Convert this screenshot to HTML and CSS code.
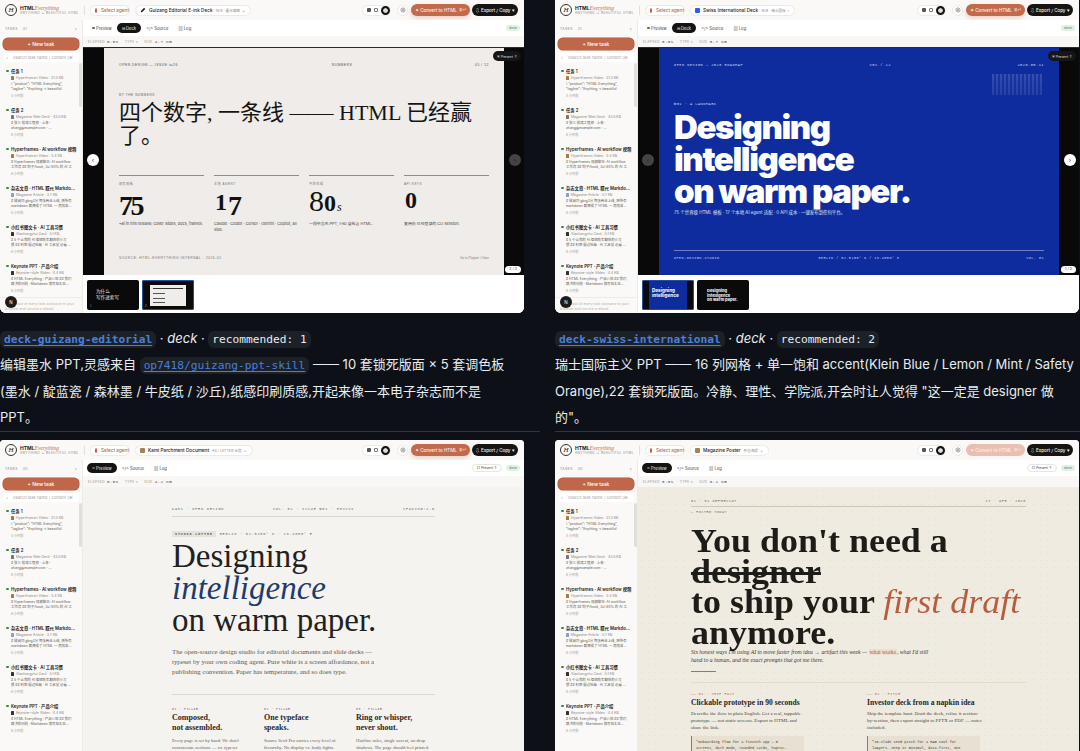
FILE: index.html
```html
<!DOCTYPE html>
<html lang="zh-CN">
<head>
    <meta charset="UTF-8">
    <meta name="viewport" content="width=device-width, initial-scale=1.0">
    <title>HTML Everything templates</title>
    <link rel="stylesheet" href="styles.css">
</head>
<body>
<div class="gallery">

    <!-- deck-guizang-editorial -->
    <div class="cell">
        <div class="window win-top">
            <div class="topbar">
                <div class="logo"><span class="logo-mark">H</span><div><div class="logo-name">HTML<em>Everything</em></div><div class="logo-tag">ANYTHING → BEAUTIFUL HTML</div></div></div>
                <span class="bar-sep"></span>
                <div class="pill agent"><i class="agent-dot"></i>Select agent</div>
                <div class="pill doc"><svg class="pen" viewBox="0 0 8 8"><path d="M1 7 L1.5 5 L5.5 1 L7 2.5 L3 6.5 Z"/></svg>Guizang Editorial E-ink Deck <small>16:9 · 墨水编辑</small> <b>⌄</b></div>
                <div class="bar-right">
                    <div class="views"><i class="v v1"></i><i class="v v2"></i><i class="v v3"></i></div>
                    <div class="gear"><svg viewBox="0 0 8 8"><circle cx="4" cy="4" r="2.8"/><circle cx="4" cy="4" r="1"/></svg></div>
                    <div class="btn-convert">✦ Convert to HTML <small>⌘↵</small></div>
                    <div class="btn-export">⇩ Export / Copy ▾</div>
                </div>
            </div>
            <div class="body">
                <aside class="sidebar">
                    <div class="side-head"><span>TASKS</span><span>31</span><b>‹</b></div>
                    <div class="new-task">+ New task</div>
                    <div class="search"><span>⌕</span>Search task name / content (⌘</div>
                    <div class="tasks">
                        <div class="task"><div class="t-title">任务 1</div><div class="t-meta"><i class="ic ic-a"></i>Hyperframes Video · 31.3 KB</div><div class="t-desc">{ "product": "HTML Everything",<br>"tagline": "Anything → beautiful</div><div class="t-time">5 小时前</div></div>
                        <div class="task"><div class="t-title">任务 2</div><div class="t-meta"><i class="ic ic-b"></i>Magazine Web Deck · 43.0 KB</div><div class="t-desc"># 张三 前端工程师 · 上海 ·<br>zhang@example.com · ...</div><div class="t-time">6 小时前</div></div>
                        <div class="task"><div class="t-title">Hyperframes · AI workflow 视频</div><div class="t-meta"><i class="ic ic-a"></i>Hyperframes Video · 3.4 KB</div><div class="t-desc"># Hyperframes 视频脚本: AI workflow<br>工作流 ## 钩子(hook, 3s) 80% 的 AI 工</div><div class="t-time">6 小时前</div></div>
                        <div class="task"><div class="t-title">杂志文章 · HTML 取代 Markdo...</div><div class="t-meta"><i class="ic ic-c"></i>Magazine Article · 3.7 KB</div><div class="t-desc"># 微调剂 gbrg2分 期多商业上线, 把所有<br>markdown 都换成了 HTML — 而效果...</div><div class="t-time">6 小时前</div></div>
                        <div class="task"><div class="t-title">小红书图文卡 · AI 工具习惯</div><div class="t-meta"><i class="ic ic-d"></i>Xiaohongshu Card · 5.1 KB</div><div class="t-desc"># 5 个让我的 AI 编辑效率翻倍的小习<br>惯 ## 封面 据过低碳 · AI 工具党 必看 ...</div><div class="t-time">6 小时前</div></div>
                        <div class="task"><div class="t-title">Keynote PPT · 产品介绍</div><div class="t-meta"><i class="ic ic-d"></i>Keynote-style Slides · 4.4 KB</div><div class="t-desc"># HTML Everything · 产品介绍 ## 我们<br>解决的问题 · Markdown 够写但太丑...</div><div class="t-time">6 小时前</div></div>
                    </div>
                    <div class="scroll-thumb"></div>
                    <div class="side-foot">The output of every task autosave to your browser and survive a reload</div>
                    <div class="avatar">N</div>
                </aside>
                <main class="main">
                    <div class="tabs">
                        <span class="tab"><i class="tab-dot"></i>Preview</span>
                        <span class="tab active">⊟ Deck</span>
                        <span class="tab">&lt;/&gt; Source</span>
                        <span class="tab">▤ Log</span>
                        <span class="done">done</span>
                    </div>
                    <div class="meta"><span>ELAPSED</span><b>0.0s</b><span>TYPE ▾</span><span>SIZE</span><b>4.7 KB</b></div>
                    <div class="stage">
                        <div class="slide slide-ink">
                            <div class="ink-head"><span>OPEN DESIGN — ISSUE №26</span><span>NUMBERS</span><span>05 / 12</span></div>
                            <div class="ink-kicker">BY THE NUMBERS</div>
                            <h1 class="ink-title">四个数字, 一条线 —— HTML 已经赢了。</h1>
                            <div class="ink-stats">
                                <div class="stat"><div class="s-label">现有模板</div><div class="s-num"><span class="big drop">7</span><span class="big drop">5</span></div><p>~ai in this release; cover slides, docs, frames.</p></div>
                                <div class="stat"><div class="s-label">本地 AGENT</div><div class="s-num"><span class="low">1</span><span class="big drop">7</span></div><p>Claude · Codex · Cursor · Gemini · Copilot, all side.</p></div>
                                <div class="stat"><div class="s-label">平均生成</div><div class="s-num"><span class="big">8</span><span class="low">0</span><em>s</em></div><p>一段杂志风 PPT, ≥60 自包含 HTML.</p></div>
                                <div class="stat"><div class="s-label">API KEYS</div><div class="s-num"><span class="low">0</span></div><p>复用你 已经登录的 CLI session.</p></div>
                            </div>
                            <div class="ink-foot"><span>SOURCE: HTML-EVERYTHING INTERNAL · 2026-05</span><em>Set in Playfair // Inter</em></div>
                        </div>
                        <div class="present">▣ Present ↑</div>
                        <div class="arrow prev on">‹</div>
                        <div class="arrow next">›</div>
                        <div class="counter">2 / 2</div>
                    </div>
                    <div class="thumbs">
                        <div class="thumb t-dark"><span>为什么<br>写作进索写</span><u>1</u></div>
                        <div class="thumb selected t-black"><div class="mini-ink"><i></i><i></i><i></i><i></i></div><u>2</u></div>
                    </div>
                </main>
            </div>
        </div>
        <div class="caption">
            <a class="chip chip-link">deck-guizang-editorial</a> · <em>deck</em> · <code class="chip">recommended: 1</code><br>
            编辑墨水 PPT,灵感来自 <a class="chip chip-link thin">op7418/guizang-ppt-skill</a> —— 10 套锁死版面 × 5 套调色板<br>
            (墨水 / 靛蓝瓷 / 森林墨 / 牛皮纸 / 沙丘),纸感印刷质感,开起来像一本电子杂志而不是<br>
            PPT。
        </div>
    </div>

    <!-- deck-swiss-international -->
    <div class="cell">
        <div class="window win-top">
            <div class="topbar">
                <div class="logo"><span class="logo-mark">H</span><div><div class="logo-name">HTML<em>Everything</em></div><div class="logo-tag">ANYTHING → BEAUTIFUL HTML</div></div></div>
                <span class="bar-sep"></span>
                <div class="pill agent"><i class="agent-dot"></i>Select agent</div>
                <div class="pill doc"><i class="doc-sq blue"></i>Swiss International Deck <small>16:9 · 瑞士国际</small> <b>›</b></div>
                <div class="bar-right">
                    <div class="views"><i class="v v1"></i><i class="v v2"></i><i class="v v3"></i></div>
                    <div class="gear"><svg viewBox="0 0 8 8"><circle cx="4" cy="4" r="2.8"/><circle cx="4" cy="4" r="1"/></svg></div>
                    <div class="btn-convert">✦ Convert to HTML <small>⌘↵</small></div>
                    <div class="btn-export">⇩ Export / Copy ▾</div>
                </div>
            </div>
            <div class="body">
                <aside class="sidebar">
                    <div class="side-head"><span>TASKS</span><span>31</span><b>‹</b></div>
                    <div class="new-task">+ New task</div>
                    <div class="search"><span>⌕</span>Search task name / content (⌘</div>
                    <div class="tasks">
                        <div class="task"><div class="t-title">任务 1</div><div class="t-meta"><i class="ic ic-a"></i>Hyperframes Video · 31.3 KB</div><div class="t-desc">{ "product": "HTML Everything",<br>"tagline": "Anything → beautiful</div><div class="t-time">5 小时前</div></div>
                        <div class="task"><div class="t-title">任务 2</div><div class="t-meta"><i class="ic ic-b"></i>Magazine Web Deck · 43.0 KB</div><div class="t-desc"># 张三 前端工程师 · 上海 ·<br>zhang@example.com · ...</div><div class="t-time">6 小时前</div></div>
                        <div class="task"><div class="t-title">Hyperframes · AI workflow 视频</div><div class="t-meta"><i class="ic ic-a"></i>Hyperframes Video · 3.4 KB</div><div class="t-desc"># Hyperframes 视频脚本: AI workflow<br>工作流 ## 钩子(hook, 3s) 80% 的 AI 工</div><div class="t-time">6 小时前</div></div>
                        <div class="task"><div class="t-title">杂志文章 · HTML 取代 Markdo...</div><div class="t-meta"><i class="ic ic-c"></i>Magazine Article · 3.7 KB</div><div class="t-desc"># 微调剂 gbrg2分 期多商业上线, 把所有<br>markdown 都换成了 HTML — 而效果...</div><div class="t-time">6 小时前</div></div>
                        <div class="task"><div class="t-title">小红书图文卡 · AI 工具习惯</div><div class="t-meta"><i class="ic ic-d"></i>Xiaohongshu Card · 5.1 KB</div><div class="t-desc"># 5 个让我的 AI 编辑效率翻倍的小习<br>惯 ## 封面 据过低碳 · AI 工具党 必看 ...</div><div class="t-time">6 小时前</div></div>
                        <div class="task"><div class="t-title">Keynote PPT · 产品介绍</div><div class="t-meta"><i class="ic ic-d"></i>Keynote-style Slides · 4.4 KB</div><div class="t-desc"># HTML Everything · 产品介绍 ## 我们<br>解决的问题 · Markdown 够写但太丑...</div><div class="t-time">6 小时前</div></div>
                    </div>
                    <div class="scroll-thumb"></div>
                    <div class="side-foot">The output of every task autosave to your browser and survive a reload</div>
                    <div class="avatar">N</div>
                </aside>
                <main class="main">
                    <div class="tabs">
                        <span class="tab"><i class="tab-dot"></i>Preview</span>
                        <span class="tab active">⊟ Deck</span>
                        <span class="tab">&lt;/&gt; Source</span>
                        <span class="tab">▤ Log</span>
                        <span class="done">done</span>
                    </div>
                    <div class="meta"><span>ELAPSED</span><b>0.0s</b><span>TYPE ▾</span><span>SIZE</span><b>5.7 KB</b></div>
                    <div class="stage">
                        <div class="slide slide-swiss">
                            <div class="swiss-head"><span>OPEN DESIGN — 2026 ROADMAP</span><span>S01 / 22</span><span>2026.05.11</span></div>
                            <div class="swiss-bars"></div>
                            <div class="swiss-kicker">№01 · A LANDMARK</div>
                            <h1 class="swiss-title">Designing<br>intelligence<br>on warm paper.</h1>
                            <p class="swiss-sub">75 个世界级 HTML 模板 · 17 个本地 AI agent 适配 · 0 API 成本 · 一键发布到任何平台。</p>
                            <div class="swiss-foot"><span>OPEN-DESIGN.STUDIO</span><span>BERLIN / 52.5200° N / 13.4050° E</span><span>VOL. 01</span></div>
                        </div>
                        <div class="present">▣ Present ↑</div>
                        <div class="arrow prev">‹</div>
                        <div class="arrow next on">›</div>
                        <div class="counter">1 / 2</div>
                    </div>
                    <div class="thumbs">
                        <div class="thumb selected t-blue"><span>Designing<br>intelligence</span></div>
                        <div class="thumb t-black t-second"><span>Designing<br>intelligence<br>on warm paper.</span></div>
                    </div>
                </main>
            </div>
        </div>
        <div class="caption">
            <a class="chip chip-link">deck-swiss-international</a> · <em>deck</em> · <code class="chip">recommended: 2</code><br>
            瑞士国际主义 PPT —— 16 列网格 + 单一饱和 accent(Klein Blue / Lemon / Mint / Safety<br>
            Orange),22 套锁死版面。冷静、理性、学院派,开会时让人觉得 "这一定是 designer 做<br>
            的"。
        </div>
    </div>

    <!-- kami -->
    <div class="cell">
        <div class="window">
            <div class="topbar">
                <div class="logo"><span class="logo-mark">H</span><div><div class="logo-name">HTML<em>Everything</em></div><div class="logo-tag">ANYTHING → BEAUTIFUL HTML</div></div></div>
                <span class="bar-sep"></span>
                <div class="pill agent"><i class="agent-dot"></i>Select agent</div>
                <div class="pill doc"><i class="doc-sq tan"></i>Kami Parchment Document <small>A4 / LETTER 长信</small> <b>⌄</b></div>
                <div class="bar-right">
                    <div class="views"><i class="v v1"></i><i class="v v2"></i><i class="v v3"></i></div>
                    <div class="gear"><svg viewBox="0 0 8 8"><circle cx="4" cy="4" r="2.8"/><circle cx="4" cy="4" r="1"/></svg></div>
                    <div class="btn-convert">✦ Convert to HTML <small>⌘↵</small></div>
                    <div class="btn-export">⇩ Export / Copy ▾</div>
                </div>
            </div>
            <div class="body">
                <aside class="sidebar">
                    <div class="side-head"><span>TASKS</span><span>30</span><b>‹</b></div>
                    <div class="new-task">+ New task</div>
                    <div class="search"><span>⌕</span>Search task name / content (⌘</div>
                    <div class="tasks">
                        <div class="task"><div class="t-title">任务 1</div><div class="t-meta"><i class="ic ic-a"></i>Hyperframes Video · 31.3 KB</div><div class="t-desc">{ "product": "HTML Everything",<br>"tagline": "Anything → beautiful</div><div class="t-time">5 小时前</div></div>
                        <div class="task"><div class="t-title">任务 2</div><div class="t-meta"><i class="ic ic-b"></i>Magazine Web Deck · 43.0 KB</div><div class="t-desc"># 张三 前端工程师 · 上海 ·<br>zhang@example.com · ...</div><div class="t-time">6 小时前</div></div>
                        <div class="task"><div class="t-title">Hyperframes · AI workflow 视频</div><div class="t-meta"><i class="ic ic-a"></i>Hyperframes Video · 3.4 KB</div><div class="t-desc"># Hyperframes 视频脚本: AI workflow<br>工作流 ## 钩子(hook, 3s) 80% 的 AI 工</div><div class="t-time">6 小时前</div></div>
                        <div class="task"><div class="t-title">杂志文章 · HTML 取代 Markdo...</div><div class="t-meta"><i class="ic ic-c"></i>Magazine Article · 3.7 KB</div><div class="t-desc"># 微调剂 gbrg2分 期多商业上线, 把所有<br>markdown 都换成了 HTML — 而效果...</div><div class="t-time">6 小时前</div></div>
                        <div class="task"><div class="t-title">小红书图文卡 · AI 工具习惯</div><div class="t-meta"><i class="ic ic-d"></i>Xiaohongshu Card · 5.1 KB</div><div class="t-desc"># 5 个让我的 AI 编辑效率翻倍的小习<br>惯 ## 封面 据过低碳 · AI 工具党 必看 ...</div><div class="t-time">6 小时前</div></div>
                        <div class="task"><div class="t-title">Keynote PPT · 产品介绍</div><div class="t-meta"><i class="ic ic-d"></i>Keynote-style Slides · 4.4 KB</div><div class="t-desc"># HTML Everything · 产品介绍 ## 我们<br>解决的问题 · Markdown 够写但太丑...</div><div class="t-time">6 小时前</div></div>
                    </div>
                    <div class="scroll-thumb"></div>
                </aside>
                <main class="main">
                    <div class="tabs">
                        <span class="tab active"><i class="tab-dot"></i>Preview</span>
                        <span class="tab">&lt;/&gt; Source</span>
                        <span class="tab">▤ Log</span>
                        <span class="present-flat">□ Present ↑</span>
                        <span class="done">done</span>
                    </div>
                    <div class="meta"><span>ELAPSED</span><b>0.0s</b><span>TYPE ▾</span><span>SIZE</span><b>4.2 KB</b></div>
                    <div class="page page-kami">
                        <div class="kami">
                            <div class="kami-head"><span>KAMI · OPEN DESIGN</span><span>VOL. 01 · ISSUE №01 · MMXXVI</span><span>SPACING:2.0</span></div>
                            <div class="kami-tagline"><span class="kami-tag">STUDIO LETTER</span>BERLIN · 52.5200° N · 13.4050° E</div>
                            <h1 class="kami-title">Designing<br><em>intelligence</em><br>on warm paper.</h1>
                            <p class="kami-lead">The open-source design studio for editorial documents and slide decks —<br>typeset by your own coding agent. Pure white is a screen affordance, not a<br>publishing convention. Paper has temperature, and so does type.</p>
                            <div class="kami-cols">
                                <div><div class="k-label">01 · PILLAR</div><h3>Composed,<br>not assembled.</h3><p>Every page is set by hand. We don't concatenate sections — we typeset</p></div>
                                <div><div class="k-label">02 · PILLAR</div><h3>One typeface<br>speaks.</h3><p>Source Serif Pro carries every level of hierarchy. No display vs. body fights.</p></div>
                                <div><div class="k-label">03 · PILLAR</div><h3>Ring or whisper,<br>never shout.</h3><p>Hairline rules, single accent, no drop shadows. The page should feel printed.</p></div>
                            </div>
                        </div>
                    </div>
                </main>
            </div>
        </div>
    </div>

    <!-- magazine poster -->
    <div class="cell">
        <div class="window">
            <div class="topbar">
                <div class="logo"><span class="logo-mark">H</span><div><div class="logo-name">HTML<em>Everything</em></div><div class="logo-tag">ANYTHING → BEAUTIFUL HTML</div></div></div>
                <span class="bar-sep"></span>
                <div class="pill agent"><i class="agent-dot"></i>Select agent</div>
                <div class="pill doc"><i class="doc-sq tan"></i>Magazine Poster <small>杂志海报</small> <b>⌄</b></div>
                <div class="bar-right">
                    <div class="views"><i class="v v1"></i><i class="v v2"></i><i class="v v3"></i></div>
                    <div class="gear"><svg viewBox="0 0 8 8"><circle cx="4" cy="4" r="2.8"/><circle cx="4" cy="4" r="1"/></svg></div>
                    <div class="btn-convert faded">✦ Convert to HTML <small>⌘↵</small></div>
                    <div class="btn-export">⇩ Export / Copy ▾</div>
                </div>
            </div>
            <div class="body">
                <aside class="sidebar">
                    <div class="side-head"><span>TASKS</span><span>30</span><b>‹</b></div>
                    <div class="new-task">+ New task</div>
                    <div class="search"><span>⌕</span>Search task name / content (⌘</div>
                    <div class="tasks">
                        <div class="task"><div class="t-title">任务 1</div><div class="t-meta"><i class="ic ic-a"></i>Hyperframes Video · 31.3 KB</div><div class="t-desc">{ "product": "HTML Everything",<br>"tagline": "Anything → beautiful</div><div class="t-time">5 小时前</div></div>
                        <div class="task"><div class="t-title">任务 2</div><div class="t-meta"><i class="ic ic-b"></i>Magazine Web Deck · 43.0 KB</div><div class="t-desc"># 张三 前端工程师 · 上海 ·<br>zhang@example.com · ...</div><div class="t-time">6 小时前</div></div>
                        <div class="task"><div class="t-title">Hyperframes · AI workflow 视频</div><div class="t-meta"><i class="ic ic-a"></i>Hyperframes Video · 3.4 KB</div><div class="t-desc"># Hyperframes 视频脚本: AI workflow<br>工作流 ## 钩子(hook, 3s) 80% 的 AI 工</div><div class="t-time">6 小时前</div></div>
                        <div class="task"><div class="t-title">杂志文章 · HTML 取代 Markdo...</div><div class="t-meta"><i class="ic ic-c"></i>Magazine Article · 3.7 KB</div><div class="t-desc"># 微调剂 gbrg2分 期多商业上线, 把所有<br>markdown 都换成了 HTML — 而效果...</div><div class="t-time">6 小时前</div></div>
                        <div class="task"><div class="t-title">小红书图文卡 · AI 工具习惯</div><div class="t-meta"><i class="ic ic-d"></i>Xiaohongshu Card · 5.1 KB</div><div class="t-desc"># 5 个让我的 AI 编辑效率翻倍的小习<br>惯 ## 封面 据过低碳 · AI 工具党 必看 ...</div><div class="t-time">6 小时前</div></div>
                        <div class="task"><div class="t-title">Keynote PPT · 产品介绍</div><div class="t-meta"><i class="ic ic-d"></i>Keynote-style Slides · 4.4 KB</div><div class="t-desc"># HTML Everything · 产品介绍 ## 我们<br>解决的问题 · Markdown 够写但太丑...</div><div class="t-time">6 小时前</div></div>
                    </div>
                    <div class="scroll-thumb"></div>
                </aside>
                <main class="main">
                    <div class="tabs">
                        <span class="tab active"><i class="tab-dot"></i>Preview</span>
                        <span class="tab">&lt;/&gt; Source</span>
                        <span class="tab">▤ Log</span>
                        <span class="present-flat">□ Present ↑</span>
                        <span class="done">done</span>
                    </div>
                    <div class="meta"><span>ELAPSED</span><b>0.0s</b><span>TYPE ▾</span><span>SIZE</span><b>6.2 KB</b></div>
                    <div class="page page-mag">
                        <div class="mag">
                            <div class="mag-head"><span>01 · 01 DEPRESSOT</span><span>17 · APR · 2026</span></div>
                            <div class="mag-posted">— POSTED TODAY</div>
                            <h1 class="mag-title">You don't need a<br><s>designer</s><br>to ship your <em>first draft</em><br>anymore.</h1>
                            <p class="mag-lead">Six honest ways I'm using AI to move faster from idea → artifact this week — <span>what works</span>, what I'd still<br>hand to a human, and the exact prompts that got me there.</p>
                            <div class="mag-bar"></div>
                            <div class="mag-cols">
                                <div><div class="m-label">—— 01 · SHIP FAST</div><h3>Clickable prototype in 90 seconds</h3><p>Describe the flow in plain English. Get a real, tappable<br>prototype — not static screens. Export to HTML and<br>share the link.</p><div class="m-quote">"Onboarding flow for a fintech app — 5<br>screens, dark mode, rounded cards, haptic-</div></div>
                                <div><div class="m-label">—— 02 · PITCH</div><h3>Investor deck from a napkin idea</h3><p>Skip the template hunt. Draft the deck, refine it section-<br>by-section, then export straight to PPTX or PDF — notes<br>included.</p><div class="m-quote">"10-slide seed pitch for a RAG tool for<br>lawyers. Keep it minimal, data-first, one</div></div>
                            </div>
                        </div>
                    </div>
                </main>
            </div>
        </div>
    </div>

</div>
</body>
</html>
```

FILE: styles.css
```css
* {
    box-sizing: border-box;
}
html, body {
    height: 751px;
    margin: 0;
    overflow: hidden;
}
body {
    font-family: Inter, "Noto Sans CJK SC", sans-serif;
    background: #0d1117;
    color: #1d1b19;
}
.gallery {
    display: grid;
    grid-template-columns: 540px 525px;
    column-gap: 15px;
}

/* window chrome */
.window {
    width: 524px;
    height: 320px;
    background: #fff;
    border-radius: 4px;
    overflow: hidden;
    display: flex;
    flex-direction: column;
}
.win-top {
    height: 313px;
    border-radius: 0 0 6px 6px;
}
.cell:nth-child(n+3) {
    padding-top: 8px;
}
.topbar {
    height: 20px;
    flex: none;
    display: flex;
    align-items: center;
    padding: 0 6px 0 5px;
    background: #faf9f7;
}
.logo {
    display: flex;
    align-items: center;
    gap: 3px;
    width: 79px;
}
.logo-mark {
    width: 12px;
    height: 12px;
    border: 0.7px solid #333;
    border-radius: 50%;
    font: italic 7px "Liberation Serif", serif;
    display: flex;
    align-items: center;
    justify-content: center;
}
.logo-name {
    font-size: 5px;
    font-weight: 700;
    line-height: 6px;
}
.logo-name em {
    font-family: "Liberation Serif", serif;
    font-size: 5.6px;
    font-weight: 400;
    color: #c0674a;
}
.logo-tag {
    font-size: 3.1px;
    letter-spacing: 0.45px;
    color: #8b8782;
    line-height: 4px;
}
.bar-sep {
    width: 1px;
    height: 9px;
    background: #e2dfda;
    margin-right: 5px;
}
.pill {
    height: 11px;
    border: 0.6px solid #eee9e3;
    border-radius: 6px;
    background: #fff;
    display: flex;
    align-items: center;
    font-size: 4.7px;
    white-space: nowrap;
}
.agent {
    width: 40px;
    padding-left: 4px;
    gap: 4px;
    color: #c0674a;
    font-weight: 500;
}
.agent-dot {
    width: 5px;
    height: 5px;
    border-radius: 50%;
    background: #c0563a;
}
.doc {
    margin-left: 5px;
    padding: 0 5px 0 4px;
    font-weight: 500;
    gap: 2px;
}
.doc small {
    font-size: 3.6px;
    color: #8b8782;
    font-weight: 400;
    margin-left: 1px;
}
.doc b {
    font-size: 4px;
    font-weight: 400;
    color: #777;
}
.pen {
    width: 6px;
    height: 6px;
    margin-right: 1px;
    fill: #222;
}
.doc-sq {
    width: 5px;
    height: 5px;
    margin-right: 1px;
    border-radius: 1px;
}
.doc-sq.blue {
    background: #2b62e3;
}
.doc-sq.tan {
    background: #a5824f;
}
.bar-right {
    margin-left: auto;
    display: flex;
    align-items: center;
    height: 12px;
}
.views {
    width: 29px;
    height: 11px;
    border-radius: 6px;
    background: #fff;
    border: 0.5px solid #eee9e3;
    display: flex;
    align-items: center;
    justify-content: space-between;
    padding-left: 4px;
}
.v {
    width: 4px;
    height: 4px;
    border-radius: 1px;
}
.v1 {
    background: #555;
}
.v2 {
    border: 0.6px solid #777;
}
.v3 {
    width: 9px;
    height: 9px;
    border-radius: 50%;
    background: #161412;
    border: 2.5px solid #161412;
    box-shadow: inset 0 0 0 3px #ddd;
}
.gear {
    width: 11px;
    height: 11px;
    margin: 0 3px 0 6px;
    border-radius: 50%;
    background: #fff;
    border: 0.5px solid #eee9e3;
    display: flex;
    align-items: center;
    justify-content: center;
}
.gear svg {
    width: 6px;
    height: 6px;
    fill: none;
    stroke: #777;
    stroke-width: 0.9;
}
.btn-convert {
    width: 59px;
    height: 12px;
    border-radius: 6px;
    background: #c26a4c;
    color: #fbeee8;
    font-size: 4.5px;
    font-weight: 500;
    display: flex;
    align-items: center;
    justify-content: center;
    gap: 2px;
    box-shadow: 0 2px 5px rgba(194, 106, 76, 0.3);
    white-space: nowrap;
}
.btn-convert small {
    font-size: 3.6px;
}
.btn-convert.faded {
    background: #e8bfb1;
    box-shadow: none;
}
.btn-export {
    width: 46px;
    height: 12px;
    margin-left: 2px;
    border-radius: 6px;
    background: #161412;
    color: #f2f0ec;
    font-size: 4.5px;
    font-weight: 500;
    display: flex;
    align-items: center;
    justify-content: center;
    white-space: nowrap;
}
.body {
    flex: 1;
    min-height: 0;
    display: flex;
}

/* task sidebar */
.sidebar {
    position: relative;
    width: 83px;
    flex: none;
    background: #faf9f7;
    padding: 0 3px;
    overflow: hidden;
    border-right: 0.5px solid #eeebe6;
}
.side-head {
    height: 18px;
    padding: 0 2px 0 2px;
    display: flex;
    align-items: center;
    gap: 5px;
    font-size: 3.4px;
    letter-spacing: 0.4px;
    color: #8b8782;
}
.side-head b {
    margin-left: auto;
    font-size: 5px;
    font-weight: 400;
}
.new-task {
    height: 12px;
    width: 76px;
    border-radius: 5px;
    background: #c0674a;
    color: #fff;
    font-size: 5px;
    font-weight: 500;
    display: flex;
    align-items: center;
    justify-content: center;
    box-shadow: 0 0 0 0.5px #a8553a;
}
.search {
    height: 9px;
    width: 75px;
    margin: 3px 0 0 1px;
    background: #fff;
    border-radius: 2px;
    color: #aaa6a0;
    font-size: 4.1px;
    display: flex;
    align-items: center;
    gap: 5px;
    padding-left: 2px;
    white-space: nowrap;
    overflow: hidden;
}
.tasks {
    margin-top: 6px;
}
.task {
    height: 39px;
    padding-left: 8px;
    position: relative;
    white-space: nowrap;
}
.task::before {
    content: "";
    position: absolute;
    left: 3px;
    top: 1.5px;
    width: 2.6px;
    height: 2.6px;
    border-radius: 50%;
    background: #2f8a4c;
}
.t-title {
    font-size: 4.3px;
    font-weight: 600;
    line-height: 7px;
}
.t-meta {
    font-size: 3.5px;
    color: #8b8782;
    line-height: 6px;
    display: flex;
    align-items: center;
    gap: 1.5px;
}
.ic {
    width: 3.4px;
    height: 3.4px;
    border-radius: 0.6px;
}
.ic-a {
    background: #a87b3c;
}
.ic-b {
    background: #777;
}
.ic-c {
    background: #8aa0c9;
}
.ic-d {
    background: #333;
}
.t-desc {
    font-size: 3.4px;
    color: #5f5b56;
    line-height: 5px;
    margin-top: 0.5px;
}
.t-time {
    font-size: 3.2px;
    color: #a09c96;
    line-height: 5px;
    margin-top: 2.5px;
}
.scroll-thumb {
    position: absolute;
    right: 0;
    top: 43px;
    width: 3px;
    height: 44px;
    background: #e1dfdb;
    border-radius: 2px;
}
.side-foot {
    position: absolute;
    left: 0;
    right: 0;
    bottom: 0;
    height: 16px;
    background: #faf9f7;
    border-top: 0.5px solid #eeebe6;
    padding: 4px 6px 0 5px;
    font-size: 3.5px;
    line-height: 5px;
    color: #b5b1ab;
}
.avatar {
    position: absolute;
    left: 5px;
    bottom: 5px;
    width: 12px;
    height: 12px;
    border-radius: 50%;
    background: #1d1b19;
    color: #fff;
    font-size: 4.5px;
    display: flex;
    align-items: center;
    justify-content: center;
}

/* main pane */
.main {
    flex: 1;
    min-width: 0;
    display: flex;
    flex-direction: column;
    background: #fff;
}
.tabs {
    height: 16px;
    flex: none;
    display: flex;
    align-items: center;
    padding: 0 4px 0 4px;
    font-size: 4.2px;
    color: #444;
    background: #fff;
}
.tab {
    height: 10px;
    padding: 0 5px;
    border-radius: 5px;
    display: flex;
    align-items: center;
    gap: 1.5px;
    white-space: nowrap;
}
.tab.active {
    background: #161412;
    color: #f2f0ec;
}
.tab-dot {
    width: 2.6px;
    height: 2.6px;
    border-radius: 50%;
    background: #7a5a48;
}
.done {
    margin-left: 4px;
    background: #e2f0e5;
    color: #4d8a5c;
    font-size: 3.4px;
    padding: 1px 3px;
    border-radius: 3px;
}
.tabs > .tab:nth-last-child(2) {
    margin-right: auto;
}
.present-flat {
    margin-left: auto;
    padding: 1px 4px;
    border: 0.5px solid #e8e5e0;
    border-radius: 4px;
    font-size: 3.4px;
}
.meta {
    height: 11px;
    flex: none;
    display: flex;
    align-items: center;
    padding: 0 5px;
    gap: 2px;
    background: #f8f7f5;
    font-size: 3.2px;
    letter-spacing: 0.4px;
    color: #98948e;
}
.meta b {
    font: 4.2px "Liberation Mono", monospace;
    color: #444;
    margin-right: 4px;
}
.meta span:nth-child(3) {
    margin-right: 4px;
}
.stage {
    position: relative;
    height: 228px;
    flex: none;
    background: #090909;
    border-top: 1.5px solid #2a2a2a;
    padding: 0 20px 0 21px;
}
.slide {
    height: 100%;
}
.present {
    position: absolute;
    right: 3px;
    top: 3px;
    height: 10px;
    padding: 0 4px;
    border-radius: 5px;
    background: #161616;
    color: #ddd;
    font-size: 3.4px;
    display: flex;
    align-items: center;
}
.arrow {
    position: absolute;
    top: 106px;
    width: 12px;
    height: 12px;
    border-radius: 50%;
    background: #444;
    color: #222;
    font-size: 6px;
    line-height: 11px;
    text-align: center;
}
.arrow.on {
    background: #fff;
}
.prev {
    left: 4px;
}
.next {
    right: 3px;
}
.counter {
    position: absolute;
    right: 3px;
    bottom: 2px;
    height: 7px;
    padding: 0 4px;
    border-radius: 4px;
    background: #fff;
    color: #333;
    font-size: 3.6px;
    line-height: 7px;
}
.thumbs {
    flex: 1;
    display: flex;
    gap: 3px;
    padding: 5px 4px 0;
    background: #fff;
}
.thumb {
    position: relative;
    width: 52px;
    height: 30px;
    border-radius: 2px;
    background: #0a0a0a;
    overflow: hidden;
    color: #eee;
    font-family: "Liberation Serif", "Noto Sans CJK SC", serif;
}
.thumb.selected {
    outline: 1px solid #1f4f9f;
    outline-offset: -1px;
}
.thumb u {
    position: absolute;
    left: 3px;
    bottom: 2px;
    font-size: 3px;
    text-decoration: none;
    color: #bbb;
}
.t-dark span {
    position: absolute;
    left: 9px;
    top: 9px;
    font-size: 4.6px;
    line-height: 6px;
}
.mini-ink {
    position: absolute;
    left: 8px;
    right: 8px;
    top: 5px;
    bottom: 4px;
    background: #efecE9;
    padding: 3px;
    display: flex;
    flex-direction: column;
    gap: 4px;
}
.mini-ink i {
    height: 1px;
    width: 40%;
    background: #555;
}
.mini-ink i:first-child {
    width: 100%;
    height: 2px;
    background: #333;
}
.t-blue {
    padding: 0 7px;
    background: #0a0a0a;
    font: 800 4.6px/5px Inter, sans-serif;
}
.t-blue span {
    display: block;
    height: 100%;
    padding: 8px 3px;
    background: #0f2c9f;
}
.t-second {
    font: 800 4px/4.6px Inter, sans-serif;
}
.t-second span {
    position: absolute;
    left: 10px;
    top: 9px;
}

/* deck: editorial ink slide */
.slide-ink {
    background: #efecE9;
    padding: 15px 15px 0;
    font-family: "Liberation Serif", "Noto Sans CJK SC", serif;
}
.ink-head {
    display: flex;
    justify-content: space-between;
    font: 3.4px "Liberation Sans", sans-serif;
    letter-spacing: 0.5px;
    color: #555;
    line-height: 5px;
}
.ink-head span:nth-child(2) {
    margin-left: 31px;
}
.ink-kicker {
    margin-top: 25px;
    font: 3.2px/5px "Liberation Sans", sans-serif;
    letter-spacing: 0.55px;
    color: #666;
}
.ink-title {
    margin: 3px 0 0;
    font-size: 22px;
    line-height: 23px;
    font-weight: 400;
    color: #151412;
}
.ink-stats {
    margin-top: 28px;
    display: grid;
    grid-template-columns: repeat(4, 85px);
    column-gap: 10px;
}
.stat {
    border-top: 0.7px solid #8f8c88;
    padding-top: 6px;
}
.s-label {
    font: 3.1px/4px "Liberation Sans", "Noto Sans CJK SC", sans-serif;
    letter-spacing: 0.5px;
    color: #777;
}
.s-num {
    height: 34px;
    display: flex;
    align-items: baseline;
    margin-top: 1px;
    line-height: 27px;
    font-weight: 400;
    color: #121110;
}
.s-num .big {
    font-size: 30px;
    letter-spacing: -1px;
}
.s-num .drop {
    position: relative;
    top: 5px;
    font-weight: 700;
    font-size: 28px;
    letter-spacing: -2.5px;
}
.s-num .low {
    font-size: 24px;
    font-weight: 700;
    padding: 0 1px;
}
.s-num em {
    font-size: 12px;
}
.stat p {
    margin: 0;
    font: 3.9px/5.6px Inter, "Noto Sans CJK SC", sans-serif;
    color: #444;
}
.ink-foot {
    position: absolute;
    left: 36px;
    right: 35px;
    bottom: 14px;
    display: flex;
    justify-content: space-between;
    font: 3.3px/5px "Liberation Sans", sans-serif;
    letter-spacing: 0.55px;
    color: #777;
}
.ink-foot em {
    font-family: "Liberation Serif", serif;
    letter-spacing: 0;
}

/* deck: swiss slide */
.slide-swiss {
    background: #0f2c9f;
    color: #fff;
    padding: 15px 15px 0;
}
.swiss-head {
    display: flex;
    justify-content: space-between;
    font: 3.6px/5px "Liberation Mono", monospace;
    letter-spacing: 0.5px;
    color: #d7dcf5;
}
.swiss-bars {
    width: 50px;
    height: 21px;
    margin: 6px 0 0 318px;
    background: repeating-linear-gradient(90deg, rgba(255, 255, 255, 0.16) 0 2.5px, rgba(255, 255, 255, 0.04) 2.5px 4px);
    -webkit-mask-image: linear-gradient(180deg, #000, rgba(0, 0, 0, 0.6));
    mask-image: linear-gradient(180deg, #000, rgba(0, 0, 0, 0.6));
}
.swiss-kicker {
    margin-top: 7px;
    font: 3.6px/5px "Liberation Mono", monospace;
    letter-spacing: 0.5px;
    color: #d7dcf5;
}
.swiss-title {
    margin: 4px 0 0;
    font-size: 33px;
    line-height: 32px;
    font-weight: 900;
    letter-spacing: -1.4px;
}
.swiss-sub {
    margin: 3px 0 0;
    font-size: 4.4px;
    line-height: 6px;
    color: #dfe3f7;
}
.swiss-foot {
    position: absolute;
    left: 36px;
    right: 35px;
    bottom: 14px;
    display: grid;
    grid-template-columns: 1fr auto 1fr;
    padding-top: 5px;
    border-top: 0.5px solid rgba(255, 255, 255, 0.4);
    font: 3.4px/5px "Liberation Mono", monospace;
    letter-spacing: 0.5px;
    color: #cfd5f2;
}
.swiss-foot span:last-child {
    text-align: right;
}

/* document previews */
.page {
    flex: 1;
    min-height: 0;
    overflow: hidden;
}
.page-kami {
    background: #f5f3ef;
}
.kami {
    width: 263px;
    margin: 0 auto;
    padding-top: 20px;
    font-family: "Liberation Serif", serif;
}
.kami-head {
    display: flex;
    justify-content: space-between;
    padding-bottom: 4px;
    border-bottom: 0.5px solid #d9d6d0;
    font: 3.5px/5px "Liberation Mono", monospace;
    letter-spacing: 0.8px;
    color: #666;
}
.kami-tagline {
    margin-top: 14px;
    display: flex;
    align-items: center;
    gap: 4px;
    font: 3.5px/6px "Liberation Mono", monospace;
    letter-spacing: 0.8px;
    color: #666;
}
.kami-tag {
    background: #e6e3dd;
    padding: 0 3px;
    font-weight: 700;
}
.kami-title {
    margin: 3px 0 0;
    font-size: 33px;
    line-height: 32px;
    font-weight: 400;
    color: #23211e;
}
.kami-title em {
    color: #1f3a6e;
}
.kami-lead {
    margin: 11px 0 0;
    font-size: 6.8px;
    line-height: 10.2px;
    color: #5a5752;
    white-space: nowrap;
}
.kami-cols {
    margin-top: 16px;
    padding-top: 12px;
    border-top: 0.5px solid #dcd9d3;
    display: grid;
    grid-template-columns: repeat(3, 78px);
    column-gap: 14px;
}
.k-label {
    font: 3px/5px "Liberation Mono", monospace;
    letter-spacing: 0.6px;
    color: #4a5d85;
}
.kami-cols h3 {
    margin: 1px 0 0;
    font-size: 8px;
    line-height: 10px;
    font-weight: 700;
    color: #2a2825;
}
.kami-cols p {
    margin: 4px 0 0;
    font-size: 4.7px;
    line-height: 7.3px;
    color: #5f5c57;
}
.page-mag {
    background-color: #f0ebe1;
    background-image: radial-gradient(rgba(120, 105, 80, 0.09) 0.5px, transparent 0.6px);
    background-size: 7px 7px;
}
.mag {
    width: 335px;
    margin: 0 auto;
    padding-top: 12px;
    font-family: "Liberation Serif", serif;
}
.mag-head {
    display: flex;
    justify-content: space-between;
    padding-bottom: 2px;
    border-bottom: 1.5px solid #cdc7ba;
    font: 3.5px/5px "Liberation Mono", monospace;
    letter-spacing: 0.6px;
    color: #6b665d;
}
.mag-posted {
    margin-top: 3px;
    font: 3.3px/5px "Liberation Mono", monospace;
    letter-spacing: 0.6px;
    color: #6b665d;
}
.mag-title {
    margin: 11px 0 0;
    font-size: 33px;
    line-height: 30.5px;
    font-weight: 700;
    color: #1e1c18;
    white-space: nowrap;
    transform: scaleX(1.09);
    transform-origin: left top;
}
.mag-title em {
    font-weight: 400;
    color: #b85c3e;
}
.mag-lead {
    margin: 0;
    font-size: 5.7px;
    line-height: 8.4px;
    font-style: italic;
    color: #3a3731;
    white-space: nowrap;
}
.mag-lead span {
    font-style: normal;
    color: #b85c3e;
    background: #eadfd0;
    padding: 0 1px;
}
.mag-bar {
    width: 25px;
    height: 1.2px;
    margin-top: 6px;
    background: #c0674a;
}
.mag-cols {
    margin-top: 10px;
    padding-top: 9px;
    border-top: 0.5px solid #e3dccf;
    display: grid;
    grid-template-columns: 176px 1fr;
}
.m-label {
    font: 3.3px/5px "Liberation Mono", monospace;
    letter-spacing: 0.6px;
    color: #b85c3e;
}
.mag-cols h3 {
    margin: 1px 0 0;
    font-size: 7.6px;
    line-height: 10px;
    font-weight: 700;
    color: #26241f;
}
.mag-cols p {
    margin: 2px 0 0;
    font-size: 5px;
    line-height: 7.2px;
    color: #4a463f;
    white-space: nowrap;
}
.m-quote {
    width: 113px;
    margin-top: 4px;
    padding: 3px 4px;
    border-left: 1px solid #c0674a;
    background: #e8e1d3;
    font: 3.6px/6px "Liberation Mono", monospace;
    color: #3f3b34;
    white-space: nowrap;
    overflow: hidden;
}

/* captions under the windows */
.caption {
    height: 119px;
    padding-top: 12px;
    border-bottom: 1px solid #30363d;
    font-size: 13px;
    line-height: 26.3px;
    color: #e6edf3;
    white-space: nowrap;
    font-family: Inter, "Noto Sans CJK SC", sans-serif;
}
.caption em {
    font-size: 13px;
}
.chip {
    padding: 2px 4px;
    border-radius: 6px;
    background: #1c2128;
    font: 11.2px "DejaVu Sans Mono", monospace;
}
.chip-link {
    color: #4a7fd8;
    font-weight: 700;
    text-decoration: underline;
    text-underline-offset: 2px;
}
.chip-link.thin {
    font-weight: 400;
}
```
